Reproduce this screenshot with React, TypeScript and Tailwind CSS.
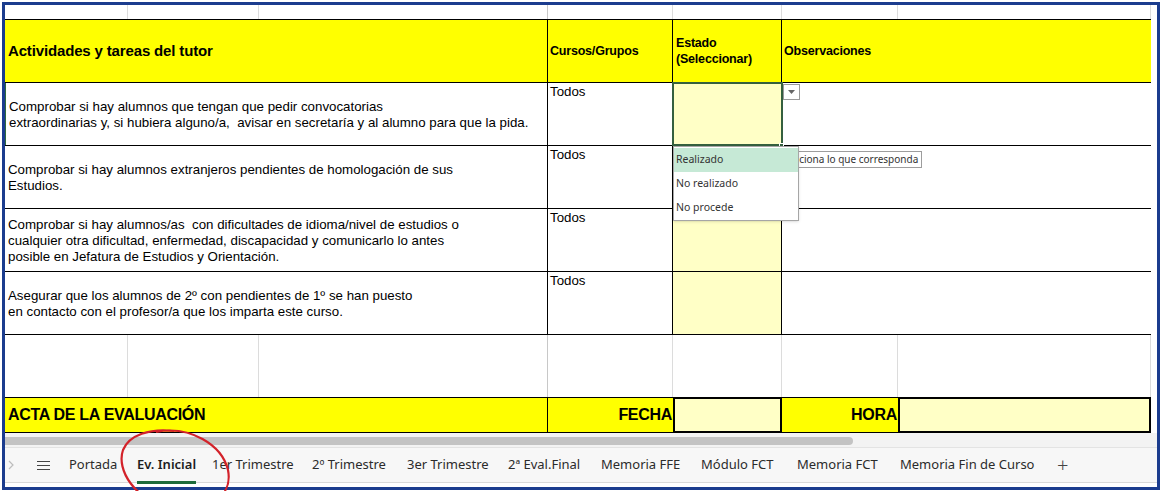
import React from "react";

const sheetFont = { fontFamily: '"Liberation Sans", Arial, sans-serif' };
const uiFont = { fontFamily: '"Noto Sans", "Open Sans", sans-serif' };

const tasks = [
  [
    "Comprobar si hay alumnos que tengan que pedir convocatorias",
    "extraordinarias y, si hubiera alguno/a,  avisar en secretaría y al alumno para que la pida.",
  ],
  ["Comprobar si hay alumnos extranjeros pendientes de homologación de sus", "Estudios."],
  [
    "Comprobar si hay alumnos/as  con dificultades de idioma/nivel de estudios o",
    "cualquier otra dificultad, enfermedad, discapacidad y comunicarlo lo antes",
    "posible en Jefatura de Estudios y Orientación.",
  ],
  [
    "Asegurar que los alumnos de 2º con pendientes de 1º se han puesto",
    "en contacto con el profesor/a que los imparta este curso.",
  ],
];

// sheet tabs with the width each one takes in the tab strip
const tabs: [string, string][] = [
  ["Portada", "w-[68px]"],
  ["Ev. Inicial", "w-[75px]"],
  ["1er Trimestre", "w-[100px]"],
  ["2º Trimestre", "w-[95px]"],
  ["3er Trimestre", "w-[101px]"],
  ["2ª Eval.Final", "w-[93px]"],
  ["Memoria FFE", "w-[100px]"],
  ["Módulo FCT", "w-[96px]"],
  ["Memoria FCT", "w-[103px]"],
  ["Memoria Fin de Curso", "w-[157px]"],
];

function BlankRow({ height }: { height: string }) {
  return (
    <div className={`flex ${height}`}>
      <div className="w-[123px] border-r border-[#dcdcdc]" />
      <div className="w-[131px] border-r border-[#dcdcdc]" />
      <div className="w-[289px] border-r border-[#c8c8c8]" />
      <div className="w-[125px] border-r border-[#dcdcdc]" />
      <div className="w-[109px] border-r border-[#dcdcdc]" />
      <div className="w-[116px] border-r border-[#dcdcdc]" />
      <div className="w-[253px] border-r border-[#dcdcdc]" />
      <div className="flex-1" />
    </div>
  );
}

export default function App() {
  return (
    <div className="relative h-[491px] w-[1163px] overflow-hidden bg-white">
      {/* Window frame */}
      <div className="ml-[2px] mt-[2px] flex h-[488px] w-[1158px] flex-col border-[3px] border-[#1b3c8e]">
        <BlankRow height="h-[14px]" />

        {/* Table */}
        <div className="w-[1146px] border-t border-black text-black" style={sheetFont}>
          {/* Header */}
          <div className="flex h-[63px] border-b border-black bg-[#ffff00]">
            <div className="flex w-[543px] items-center border-r border-black pl-[3px] text-[15px] font-bold tracking-[-0.15px]">
              Actividades y tareas del tutor
            </div>
            <div className="flex w-[125px] items-center border-r border-black pl-[2px] text-[12.5px] font-bold tracking-[-0.2px]">
              Cursos/Grupos
            </div>
            <div className="w-[109px] border-r border-black pl-[3px] pt-[15px] text-[12.5px] font-bold leading-[16px] tracking-[-0.2px]">
              Estado
              <br />
              (Seleccionar)
            </div>
            <div className="flex flex-1 items-center pl-[2px] text-[12.5px] font-bold tracking-[-0.2px]">
              Observaciones
            </div>
          </div>

          {tasks.map((lines, i) => (
            <div key={i} className="flex h-[63px] border-b border-black">
              <div
                className={`flex w-[543px] flex-col justify-center border-r border-black pl-[3px] pt-[2px] text-[13.3px] leading-[16px] ${
                  i === 0 ? "border-l border-l-[#2f6b3c]" : ""
                }`}
              >
                {lines.map((l) => (
                  <span key={l} className="whitespace-pre">
                    {l}
                  </span>
                ))}
              </div>
              <div className="w-[125px] border-r border-black pl-[2px] pt-[1px] text-[13.3px] leading-[16px]">
                Todos
              </div>
              <div
                className={`w-[109px] border-r border-black bg-[#ffffc6] ${
                  i === 0 ? "relative outline-2 -outline-offset-1 outline-[#35603f]" : ""
                }`}
              >
                {i === 0 && (
                  <span className="absolute -bottom-[3px] -right-[3px] h-[5px] w-[5px] border border-white bg-[#35603f]" />
                )}
              </div>
              <div className="flex-1">
                {i === 0 && (
                  <div className="ml-[1px] mt-[1px] flex h-[16px] w-[17px] items-center justify-center border border-[#9a9a9a] bg-white">
                    <svg width="7" height="4" viewBox="0 0 7 4">
                      <path d="M0 0h7L3.5 4z" fill="#666" />
                    </svg>
                  </div>
                )}
              </div>
            </div>
          ))}
        </div>

        <BlankRow height="h-[62px]" />

        {/* Acta row */}
        <div className="flex h-[36px] w-[1146px] text-[16px] font-bold tracking-[-0.3px] text-black" style={sheetFont}>
          <div className="flex w-[543px] items-center border-y border-r border-black bg-[#ffff00] pl-[3px]">
            ACTA DE LA EVALUACIÓN
          </div>
          <div className="flex w-[125px] items-center justify-end border-y border-black bg-[#ffff00] pr-[1px]">
            FECHA
          </div>
          <div className="w-[109px] border-2 border-black bg-[#ffffc6]" />
          <div className="flex w-[116px] items-center justify-end border-y border-black bg-[#ffff00] pr-[1px]">
            HORA
          </div>
          <div className="flex-1 border-2 border-black bg-[#ffffc6]" />
        </div>

        {/* Horizontal scrollbar */}
        <div className="h-[15px] border-b border-[#e3e3e3] bg-[#f3f3f3] pt-[4px]">
          <div className="h-[8px] w-[848px] rounded-r-full bg-[#c3c3c3]" />
        </div>

        {/* Sheet tabs */}
        <div
          className="flex h-[35px] items-center border-b border-[#d9d9d9] bg-[#f7f7f7] text-[13px] text-[#2b2b2b]"
          style={uiFont}
        >
          <svg width="6" height="10" viewBox="0 0 6 10" className="ml-[3px] mr-[23px]">
            <path d="M1 1l4 4-4 4" fill="none" stroke="#bdbdbd" strokeWidth="1.2" />
          </svg>
          <svg width="13" height="11" viewBox="0 0 13 11" className="mr-[19px]">
            <path d="M0 1.5h13M0 5.5h13M0 9.5h13" stroke="#444" strokeWidth="1.2" />
          </svg>
          {tabs.map(([t, w]) => (
            <div key={t} className={`relative flex h-full shrink-0 items-center ${w}`}>
              <span className={t === "Ev. Inicial" ? "relative font-semibold text-[#1e1e1e]" : ""}>
                {t}
                {t === "Ev. Inicial" && (
                  <span className="absolute -bottom-[9px] left-0 right-0 h-[3px] bg-[#1e6b3a]" />
                )}
              </span>
            </div>
          ))}
          <span className="text-[20px] font-light leading-none text-[#444]">+</span>
        </div>
      </div>

      {/* Validation tooltip */}
      <div
        className="absolute left-[771px] top-[151px] border border-[#9d9d9d] bg-white px-[3px] text-[10px] leading-[15px] text-[#333]"
        style={uiFont}
      >
        Selecciona lo que corresponda
      </div>

      {/* Open dropdown */}
      <div
        className="absolute left-[673px] top-[146px] z-10 w-[126px] border border-[#a6a6a6] bg-white pt-[1px] text-[10.5px] text-[#333] shadow-sm"
        style={uiFont}
      >
        <div className="flex h-[24px] items-center bg-[#c6e9d6] pl-[2px]">Realizado</div>
        <div className="flex h-[24px] items-center pl-[2px]">No realizado</div>
        <div className="flex h-[24px] items-center pl-[2px]">No procede</div>
      </div>

      {/* Hand-drawn red circle */}
      <svg className="pointer-events-none absolute left-0 top-0 z-20" width="1163" height="491">
        <path
          d="M156 432 C 190 425, 222 445, 228 470 C 234 500, 200 515, 170 508 C 135 500, 116 470, 123 450 C 129 435, 150 428, 174 431"
          fill="none"
          stroke="#d3222a"
          strokeWidth="2.2"
        />
      </svg>
    </div>
  );
}
